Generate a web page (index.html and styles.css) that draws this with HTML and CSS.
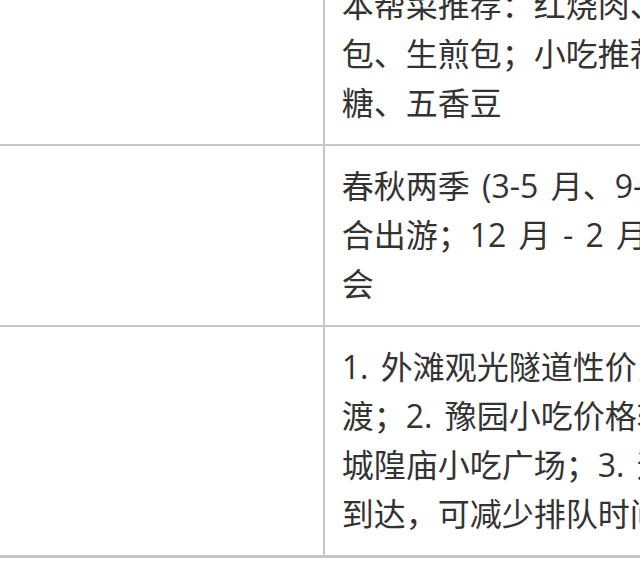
FILE: index.html
```html
<!DOCTYPE html>
<html lang="zh-CN">
<head>
<meta charset="utf-8">
<title>上海旅游攻略</title>
<link rel="stylesheet" href="styles.css">
</head>
<body>
<div class="viewport">
  <table class="guide">
    <tbody>
      <tr>
        <td class="label"></td>
        <td class="info">本帮菜推荐：红烧肉、油爆虾、腌笃鲜；点心推荐：小笼<br>包、生煎包；小吃推荐：蟹壳黄、排骨年糕、梨膏<br>糖、五香豆</td>
      </tr>
      <tr>
        <td class="label"></td>
        <td class="info">春秋两季 (3-5 月、9-11 月) 气候宜人，最适<br>合出游；12 月 - 2 月较冷，但春节期间有豫园灯<br>会</td>
      </tr>
      <tr>
        <td class="label"></td>
        <td class="info">1. 外滩观光隧道性价比不高，建议乘坐轮<br>渡；2. 豫园小吃价格较高，可前往<br>城隍庙小吃广场；3. 迪士尼建议开园前<br>到达，可减少排队时间</td>
      </tr>
    </tbody>
  </table>
</div>
</body>
</html>
```
FILE: styles.css
```css
html, body {
  margin: 0;
  padding: 0;
  background: #ffffff;
  overflow: hidden;
}

.viewport {
  width: 640px;
  height: 578px;
  overflow: hidden;
}

.guide {
  border-collapse: collapse;
  margin-top: -35px;
  width: 960px;
  table-layout: fixed;
  font-family: "Open Sans", "Noto Sans CJK SC", sans-serif;
  font-size: 32px;
  line-height: 49px;
  word-spacing: 4px;
  color: #333333;
  border-bottom: 3px solid #c4c6ca;
}

.guide td {
  border-bottom: 2px solid #c4c6ca;
  padding: 15px 17px 17px;
  vertical-align: top;
  white-space: nowrap;
}

.guide .label {
  width: 288px;
  border-right: 2px solid #c4c6ca;
}

.guide .info {
  width: 600px;
}
```
